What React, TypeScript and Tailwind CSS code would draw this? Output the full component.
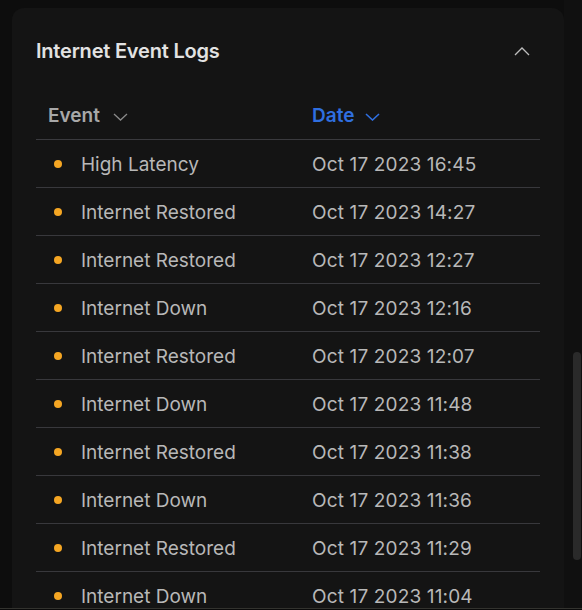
const logs = [
  { event: "High Latency", date: "Oct 17 2023 16:45" },
  { event: "Internet Restored", date: "Oct 17 2023 14:27" },
  { event: "Internet Restored", date: "Oct 17 2023 12:27" },
  { event: "Internet Down", date: "Oct 17 2023 12:16" },
  { event: "Internet Restored", date: "Oct 17 2023 12:07" },
  { event: "Internet Down", date: "Oct 17 2023 11:48" },
  { event: "Internet Restored", date: "Oct 17 2023 11:38" },
  { event: "Internet Down", date: "Oct 17 2023 11:36" },
  { event: "Internet Restored", date: "Oct 17 2023 11:29" },
  { event: "Internet Down", date: "Oct 17 2023 11:04" },
];

export default function App() {
  return (
    <div
      className="flex h-[610px] w-[582px] flex-col overflow-hidden bg-[#0d0d0d]"
      style={{ fontFamily: "Inter, 'Noto Sans', sans-serif" }}
    >
      <div className="flex h-[608px] overflow-hidden">
        <div className="flex-1 pl-[12px] pt-[8px]">
          <div className="w-[552px] rounded-t-[12px] bg-[#141414] px-[24px]">
            <div className="flex h-[84px] items-center justify-between pt-[2px]">
              <h2 className="text-[20px] font-semibold tracking-[-0.2px] text-[#e2e2e2]">
                Internet Event Logs
              </h2>
              <svg width="16" height="9" viewBox="0 0 16 9" className="mr-[10px] text-[#bdbdbd]">
                <path d="M1 8 L8 1 L15 8" fill="none" stroke="currentColor" strokeWidth="1.3" />
              </svg>
            </div>
            <div className="w-[504px]">
              <div className="flex h-[48px] items-center border-b border-[#3a3a3e] pt-[2px] text-[19px] font-semibold">
                <div className="flex w-[276px] items-center gap-[13px] pl-[12px] text-[#a8a8a8]">
                  Event
                  <svg width="15" height="8" viewBox="0 0 15 8" className="text-[#8a8a8a]">
                    <path d="M1 1 L7.5 7 L14 1" fill="none" stroke="currentColor" strokeWidth="1.3" />
                  </svg>
                </div>
                <div className="flex items-center gap-[11px] text-[#2f6fe0]">
                  Date
                  <svg width="15" height="8" viewBox="0 0 15 8">
                    <path d="M1 1 L7.5 7 L14 1" fill="none" stroke="currentColor" strokeWidth="1.6" />
                  </svg>
                </div>
              </div>
              {logs.map((l, i) => (
                <div
                  key={i}
                  className="flex h-[48px] items-center border-b border-[#38383c] pt-[3px] text-[19px] text-[#b8b8b8]"
                >
                  <div className="flex w-[276px] items-center">
                    <span className="mb-[2px] ml-[18px] mr-[19px] h-[8px] w-[8px] rounded-full bg-[#f5a623]" />
                    {l.event}
                  </div>
                  <div className="tracking-[0.15px]">{l.date}</div>
                </div>
              ))}
            </div>
          </div>
        </div>
        <div className="flex w-[18px] flex-col bg-[#101010] pt-[352px]">
          <div className="ml-[9px] h-[208px] w-[8px] rounded-full bg-[#2a2a2a]" />
        </div>
      </div>
      <div className="h-px bg-[#33332f]" />
      <div className="h-px bg-[#0a0a0a]" />
    </div>
  );
}
